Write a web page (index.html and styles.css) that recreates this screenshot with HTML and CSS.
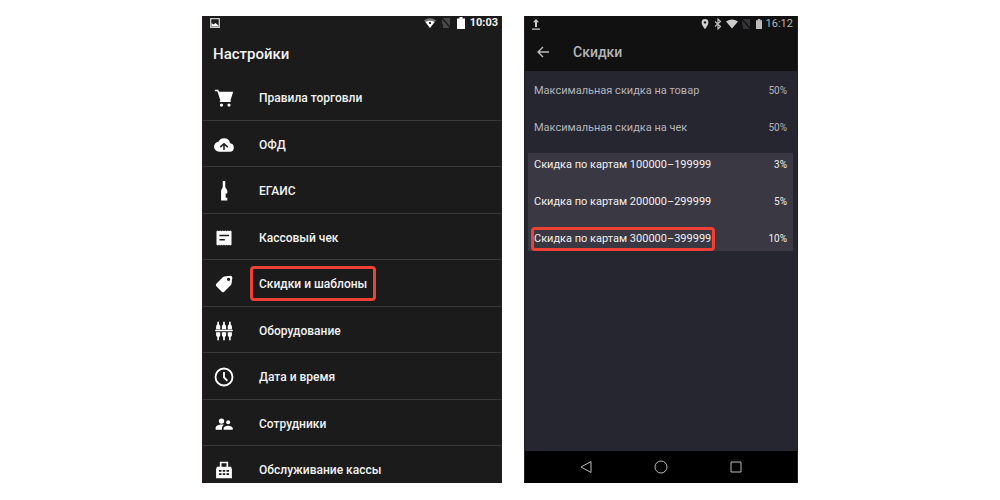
FILE: index.html
```html
<!DOCTYPE html>
<html lang="ru">
<head>
<meta charset="utf-8">
<meta name="viewport" content="width=device-width, initial-scale=1">
<title>Настройки скидок</title>
<link rel="stylesheet" href="styles.css">
</head>
<body>
<main class="stage">
  <section class="phone settings">
    <div class="status">
      <svg class="glyph" viewBox="0 0 12 12"><path fill="none" stroke="#ccc" stroke-width="1.3" d="M1.700 1.700h8.600v8.600H1.700z"/><path fill="#fff" d="M2.500 9.500V6l2 1.500L6.500 6l3 2.500v1z"/></svg>
      <span class="spacer"></span>
      <svg class="glyph wifi" viewBox="0 0 14 12"><path fill="#777" d="M1 3.500Q7-1 13 3.500L7 11z"/><path fill="#fff" d="M2.500 5Q7 2.500 11.500 5L7 11z"/><path fill="#333" d="M6 5h2v2H6z"/></svg>
      <svg class="glyph" viewBox="0 0 12 12"><path fill="#484848" d="M10 1v10H3V8L2 6.500V1z"/><path stroke="#181818" stroke-width="1.200" d="M2 1l8.500 10"/></svg>
      <svg class="glyph" viewBox="0 0 12 12"><path fill="#fff" d="M4.500 0h3v1.500H10V12H2V1.500h2.500z"/></svg>
      <time class="clock">10:03</time>
    </div>
    <h1 class="heading">Настройки</h1>
    <nav class="menu">
      <a class="item" href="#trade"><svg class="icon" viewBox="0 0 24 24"><path d="M1 2h4l1.200 2.500H23l-3.500 11.300H8L4 4H1z"/><path d="M7 15h13v1.800H7z"/><circle cx="9" cy="20.500" r="1.900"/><circle cx="18" cy="20.500" r="1.900"/></svg><span class="label">Правила торговли</span></a>
      <a class="item" href="#ofd"><svg class="icon" viewBox="0 0 24 24"><path d="M19.350 10.040A7.490 7.490 0 0 0 12 4a7.500 7.500 0 0 0-6.650 4.040A6 6 0 0 0 6 20h13a5 5 0 0 0 .350-9.960z"/><path fill="none" stroke="#1b1b1b" stroke-width="1.800" d="M12 18v-6M7.500 14.500L12 10.500l4.500 4"/></svg><span class="label">ОФД</span></a>
      <a class="item" href="#egais"><svg class="icon" viewBox="0 0 24 24"><path d="M10.500 0h3v7c0 2 2.500 3 2.500 5v3h-2v5h2v3.500H8.500V12c0-2 2-3 2-5z"/></svg><span class="label">ЕГАИС</span></a>
      <a class="item" href="#receipt"><svg class="icon" viewBox="0 0 24 24"><path d="M3 4l1.500-1L6 4l1.500-1L9 4l1.500-1L12 4l1.500-1L15 4l1.500-1L18 4l1.500-1L21 4v16l-1.500 1-1.500-1-1.500 1-1.500-1-1.500 1-1.500-1-1.500 1L9 20l-1.500 1L6 20l-1.500 1L3 20z"/><path stroke="#1b1b1b" stroke-width="1.800" d="M6.500 9H18M6.500 14H13"/></svg><span class="label">Кассовый чек</span></a>
      <a class="item" href="#discounts"><svg class="icon" viewBox="0 0 24 24"><path fill-rule="evenodd" d="M12.500 3l7-1q2.500 0 2.500 2.500l-1 7.500q-.200.700-.700 1.200l-8 8q-1.500 1.300-3 0l-6.500-6.500q-1.300-1.500 0-3l8-8q.700-.600 1.700-.700zM17.500 4.500a1.900 1.900 0 1 0 .010 0z"/></svg><span class="label label-marked">Скидки и шаблоны</span></a>
      <a class="item" href="#devices"><svg class="icon" viewBox="0 0 24 24"><path d="M4 1h2v3l1.500 2v4h-5V6L4 4zM11 1h2v3l1.500 2v4h-5V6L11 4zM18 1h2v3l1.500 2v4h-5V6L18 4zM1.500 10.500h21v1.800h-21zM2.500 13.500h5v4L6 19.500V23H4v-3.500l-1.500-2zM9.500 13.500h5v4l-1.500 2V23h-2v-3.500l-1.500-2zM16.500 13.500h5v4l-1.500 2V23h-2v-3.500l-1.500-2z"/></svg><span class="label">Оборудование</span></a>
      <a class="item" href="#time"><svg class="icon" viewBox="0 0 24 24"><circle cx="12" cy="12" r="10.200" fill="none" stroke="#fff" stroke-width="2.200"/><path fill="none" stroke="#fff" stroke-width="2.200" d="M12 6v6.500l4 4"/></svg><span class="label">Дата и время</span></a>
      <a class="item" href="#staff"><svg class="icon" viewBox="0 0 24 24"><circle cx="9" cy="8.500" r="3.200"/><circle cx="17" cy="10" r="2.400"/><path d="M2 19v-2.500c0-3 4.500-4 7-4 1 0 2 .100 3 .500-2 1.200-2.500 2.500-2.500 6zM11.500 19v-2c0-2 3.500-3 5.500-3s5.500 1 5.500 3v2z"/></svg><span class="label">Сотрудники</span></a>
      <a class="item" href="#service"><svg class="icon" viewBox="0 0 24 24"><path fill-rule="evenodd" d="M7 2h10v6h3.500l1 3v11h-19V11l1-3H7zM9 4v4h6V4zM6 12v2h3v-2zm4.500 0v2h3v-2zm4.500 0v2h3v-2zm-9 4v2h3v-2zm4.500 0v2h3v-2zm4.500 0v2h3v-2z"/></svg><span class="label">Обслуживание кассы</span></a>
    </nav>
  </section>

  <section class="phone discounts">
    <header class="appbar">
      <div class="status">
        <svg class="glyph" viewBox="0 0 12 12"><path fill="#ccc" d="M6 1l3 3.300H7V9H5V4.300H3zM2 10.500h8v1.200H2z"/></svg>
        <span class="spacer"></span>
        <svg class="glyph" viewBox="0 0 12 12"><path fill="#ccc" fill-rule="evenodd" d="M6 1a3.400 3.400 0 0 0-3.400 3.400C2.600 7 6 11 6 11s3.400-4 3.400-6.600A3.400 3.400 0 0 0 6 1zm0 2.200a1.200 1.200 0 1 1-.010 0z"/></svg>
        <svg class="glyph" viewBox="0 0 12 12"><path fill="none" stroke="#bbb" stroke-width="1.200" d="M3 3.500l5.500 5L6 11V1l2.500 2.500L3 8.500"/></svg>
        <svg class="glyph wifi" viewBox="0 0 14 12"><path fill="#ccc" d="M1 3.500Q7-.500 13 3.500L7 10.500z"/></svg>
        <svg class="glyph" viewBox="0 0 12 12"><path fill="#343438" d="M10 1v10H3V8L2 6.500V1z"/><path stroke="#111" stroke-width="1.200" d="M2 1l8.500 10"/></svg>
        <svg class="glyph" viewBox="0 0 12 12"><path fill="#bbb" d="M4.700 1h2.600v1.200H9V11H3V2.200h1.700z"/></svg>
        <time class="clock">16:12</time>
      </div>
      <div class="titlebar">
        <button class="back" type="button" aria-label="Назад"><svg viewBox="0 0 14 14"><path fill="none" stroke="#bbb" stroke-width="1.400" d="M7 2L2 7l5 5M2 7h11"/></svg></button>
        <h2 class="title">Скидки</h2>
      </div>
    </header>
    <div class="content">
      <ul class="rates">
        <li class="rate"><span class="name">Максимальная скидка на товар</span><span class="value">50%</span></li>
        <li class="rate"><span class="name">Максимальная скидка на чек</span><span class="value">50%</span></li>
      </ul>
      <ul class="rates card">
        <li class="rate"><span class="name">Скидка по картам 100000–199999</span><span class="value">3%</span></li>
        <li class="rate"><span class="name">Скидка по картам 200000–299999</span><span class="value">5%</span></li>
        <li class="rate"><span class="name name-marked">Скидка по картам 300000–399999</span><span class="value">10%</span></li>
      </ul>
    </div>
    <div class="navbar">
      <button class="key" type="button" aria-label="Назад"><svg viewBox="0 0 14 14"><path d="M12 1.500v11L2 7z"/></svg></button>
      <button class="key" type="button" aria-label="Домой"><svg viewBox="0 0 14 14"><circle cx="7" cy="7" r="6"/></svg></button>
      <button class="key" type="button" aria-label="Недавние"><svg viewBox="0 0 14 14"><path d="M2 2h10v10H2z"/></svg></button>
    </div>
  </section>
</main>
</body>
</html>
```
FILE: styles.css
```css
* { box-sizing: border-box; }

body {
  margin: 0;
  background: #fff;
  font-family: Roboto, "Liberation Sans", sans-serif;
}

h1, h2, ul { margin: 0; padding: 0; }

button {
  display: flex;
  padding: 0;
  border: 0;
  background: none;
  cursor: pointer;
}

svg { display: block; flex: none; }

.stage {
  display: flex;
  justify-content: center;
  gap: 22px;
  min-height: 100vh;
  padding: 16px 16px 17px;
}

.phone {
  display: flex;
  flex-direction: column;
  overflow: hidden;
}

.settings {
  flex: 0 1 300px;
  background: #1b1b1b;
  color: #f2f2f2;
  border: solid #2b1a28;
  border-width: 0 1px;
}

.discounts {
  flex: 0 1 274px;
  background: #262630;
  color: #b4b4b8;
  border: solid #241c2a;
  border-width: 0 1px;
}

.status {
  display: flex;
  align-items: center;
  gap: 3px;
  height: 14px;
  padding: 0 3px 0 6px;
}

.spacer { flex: 1; }

.glyph { width: 12px; height: 12px; }
.wifi { width: 14px; }

.clock {
  font-size: 11px;
  line-height: 14px;
  font-weight: 700;
}

.heading {
  padding: 14px 10px 10px;
  font-size: 15px;
  line-height: 20px;
  font-weight: 500;
}

.menu {
  flex: 1;
  display: grid;
  grid-template-rows: repeat(8, 1fr) 37px;
}

.item {
  display: flex;
  align-items: flex-start;
  padding: 6px 11px 0;
  border-bottom: 1px solid #383a39;
  color: inherit;
  text-decoration: none;
}

.item:last-child { border-bottom: 0; }

.icon {
  width: 20px;
  height: 20px;
  margin: 8px 16px 0 0;
  fill: #fff;
}

.label {
  padding: 7px 6px 5px;
  border: 3px solid transparent;
  border-radius: 4px;
  font-size: 12px;
  line-height: 17px;
  font-weight: 500;
  white-space: nowrap;
}

.label-marked { border-color: #ee4035; }

.appbar { background: #111; }

.discounts .status {
  gap: 1px;
  height: 16px;
  padding: 0 4px 0 5px;
}

.discounts .clock { font-weight: 400; }

.titlebar {
  display: flex;
  align-items: center;
  gap: 23px;
  height: 39px;
  padding: 0 11px;
}

.back svg { width: 14px; height: 14px; }

.title {
  font-size: 14px;
  line-height: 20px;
  font-weight: 500;
}

.content {
  flex: 1;
  display: flex;
  flex-direction: column;
  gap: 13px;
  padding: 8px 4px 8px 3px;
}

.rates {
  display: flex;
  flex-direction: column;
  gap: 13px;
  list-style: none;
  font-size: 11px;
}

.card {
  background: #3a3842;
  color: #f0f0f0;
}

.rate {
  display: flex;
  align-items: baseline;
  justify-content: space-between;
  padding: 0 6px 0 3px;
}

.name {
  padding-right: 1px;
  border: 3px solid transparent;
  border-radius: 4px;
  line-height: 18px;
  white-space: nowrap;
}

.name-marked { border-color: #ee4035; }

.value { font-size: 10px; }

.navbar {
  display: flex;
  justify-content: center;
  align-items: center;
  gap: 61px;
  height: 32px;
  background: #000;
}

.key svg {
  width: 14px;
  height: 14px;
  fill: none;
  stroke: #b8b8b8;
  stroke-width: 1;
}
```
